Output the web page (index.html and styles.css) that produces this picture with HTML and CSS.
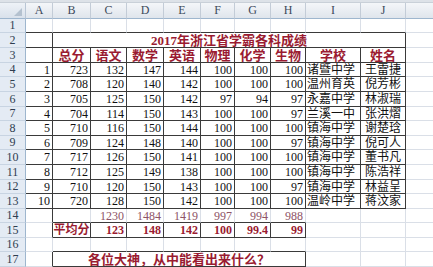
FILE: index.html
```html
<!DOCTYPE html>
<html lang="zh">
<head>
<meta charset="utf-8">
<title>2017年浙江省学霸各科成绩</title>
<link rel="stylesheet" href="styles.css">
</head>
<body>
<div class="window">
  <div class="topbar"></div>
  <div class="sheet">
    <!-- column headers -->
    <div class="corner"></div>
    <div class="ch">A</div><div class="ch">B</div><div class="ch">C</div><div class="ch">D</div><div class="ch">E</div><div class="ch">F</div><div class="ch">G</div><div class="ch">H</div><div class="ch">I</div><div class="ch">J</div><div class="ch"></div>

    <!-- row 1 -->
    <div class="rh">1</div>
    <div class="c db"></div><div class="c db"></div><div class="c db"></div><div class="c db"></div><div class="c db"></div><div class="c db"></div><div class="c db"></div><div class="c db"></div><div class="c db"></div><div class="c db"></div><div class="c"></div>

    <!-- row 2 -->
    <div class="rh">2</div>
    <div class="c dr db"></div>
    <div class="c dr db hd title span9">2017年浙江省学霸各科成绩</div>
    <div class="c"></div>

    <!-- row 3 -->
    <div class="rh">3</div>
    <div class="c dr db"></div>
    <div class="c dr db hd">总分</div><div class="c dr db hd">语文</div><div class="c dr db hd">数学</div><div class="c dr db hd">英语</div><div class="c dr db hd">物理</div><div class="c dr db hd">化学</div><div class="c dr db hd">生物</div><div class="c dr db hd">学校</div><div class="c dr db hd">姓名</div>
    <div class="c"></div>

    <!-- row 4 -->
    <div class="rh">4</div>
    <div class="c dr db n">1</div><div class="c dr db n">723</div><div class="c dr db n">132</div><div class="c dr db n">147</div><div class="c dr db n">144</div><div class="c dr db n">100</div><div class="c dr db n">100</div><div class="c dr db n">100</div><div class="c dr db s">诸暨中学</div><div class="c dr db m">王雷捷</div>
    <div class="c"></div>

    <!-- row 5 -->
    <div class="rh">5</div>
    <div class="c dr db n">2</div><div class="c dr db n">708</div><div class="c dr db n">120</div><div class="c dr db n">140</div><div class="c dr db n">142</div><div class="c dr db n">100</div><div class="c dr db n">100</div><div class="c dr db n">100</div><div class="c dr db s">温州育英</div><div class="c dr db m">倪芳彬</div>
    <div class="c"></div>

    <!-- row 6 -->
    <div class="rh">6</div>
    <div class="c dr db n">3</div><div class="c dr db n">705</div><div class="c dr db n">125</div><div class="c dr db n">150</div><div class="c dr db n">142</div><div class="c dr db n">97</div><div class="c dr db n">94</div><div class="c dr db n">97</div><div class="c dr db s">永嘉中学</div><div class="c dr db m">林淑瑞</div>
    <div class="c"></div>

    <!-- row 7 -->
    <div class="rh">7</div>
    <div class="c dr db n">4</div><div class="c dr db n">704</div><div class="c dr db n">114</div><div class="c dr db n">150</div><div class="c dr db n">143</div><div class="c dr db n">100</div><div class="c dr db n">100</div><div class="c dr db n">97</div><div class="c dr db s">兰溪一中</div><div class="c dr db m">张洪熠</div>
    <div class="c"></div>

    <!-- row 8 -->
    <div class="rh">8</div>
    <div class="c dr db n">5</div><div class="c dr db n">710</div><div class="c dr db n">116</div><div class="c dr db n">150</div><div class="c dr db n">144</div><div class="c dr db n">100</div><div class="c dr db n">100</div><div class="c dr db n">100</div><div class="c dr db s">镇海中学</div><div class="c dr db m">谢楚琀</div>
    <div class="c"></div>

    <!-- row 9 -->
    <div class="rh">9</div>
    <div class="c dr db n">6</div><div class="c dr db n">709</div><div class="c dr db n">124</div><div class="c dr db n">148</div><div class="c dr db n">140</div><div class="c dr db n">100</div><div class="c dr db n">100</div><div class="c dr db n">97</div><div class="c dr db s">镇海中学</div><div class="c dr db m">倪可人</div>
    <div class="c"></div>

    <!-- row 10 -->
    <div class="rh">10</div>
    <div class="c dr db n">7</div><div class="c dr db n">717</div><div class="c dr db n">126</div><div class="c dr db n">150</div><div class="c dr db n">141</div><div class="c dr db n">100</div><div class="c dr db n">100</div><div class="c dr db n">100</div><div class="c dr db s">镇海中学</div><div class="c dr db m">董书凡</div>
    <div class="c"></div>

    <!-- row 11 -->
    <div class="rh">11</div>
    <div class="c dr db n">8</div><div class="c dr db n">712</div><div class="c dr db n">125</div><div class="c dr db n">149</div><div class="c dr db n">138</div><div class="c dr db n">100</div><div class="c dr db n">100</div><div class="c dr db n">100</div><div class="c dr db s">镇海中学</div><div class="c dr db m">陈浩祥</div>
    <div class="c"></div>

    <!-- row 12 -->
    <div class="rh">12</div>
    <div class="c dr db n">9</div><div class="c dr db n">710</div><div class="c dr db n">120</div><div class="c dr db n">150</div><div class="c dr db n">143</div><div class="c dr db n">100</div><div class="c dr db n">100</div><div class="c dr db n">97</div><div class="c dr db s">镇海中学</div><div class="c dr db m">林益呈</div>
    <div class="c"></div>

    <!-- row 13 -->
    <div class="rh">13</div>
    <div class="c dr db n">10</div><div class="c dr db n">720</div><div class="c dr db n">128</div><div class="c dr db n">150</div><div class="c dr db n">142</div><div class="c dr db n">100</div><div class="c dr db n">100</div><div class="c dr db n">100</div><div class="c dr db s">温岭中学</div><div class="c dr db m">蒋汶家</div>
    <div class="c"></div>

    <!-- row 14 -->
    <div class="rh">14</div>
    <div class="c dr"></div>
    <div class="c db"></div><div class="c db n sum">1230</div><div class="c db n sum">1484</div><div class="c db n sum">1419</div><div class="c db n sum">997</div><div class="c db n sum">994</div><div class="c db n sum">988</div>
    <div class="c"></div><div class="c"></div><div class="c"></div>

    <!-- row 15 -->
    <div class="rh">15</div>
    <div class="c dr"></div>
    <div class="c dr db hd avg-label">平均分</div><div class="c dr db n avg">123</div><div class="c dr db n avg">148</div><div class="c dr db n avg">142</div><div class="c dr db n avg">100</div><div class="c dr db n avg">99.4</div><div class="c dr db n avg">99</div>
    <div class="c"></div><div class="c"></div><div class="c"></div>

    <!-- row 16 -->
    <div class="rh">16</div>
    <div class="c"></div>
    <div class="c db"></div><div class="c db"></div><div class="c db"></div><div class="c db"></div><div class="c db"></div><div class="c db"></div><div class="c db"></div>
    <div class="c"></div><div class="c"></div><div class="c"></div>

    <!-- row 17 -->
    <div class="rh">17</div>
    <div class="c dr"></div>
    <div class="c dr db hd note span7">各位大神，从中能看出来什么？</div>
    <div class="c"></div><div class="c"></div><div class="c"></div>
  </div>
</div>
</body>
</html>
```

FILE: styles.css
```css
* { box-sizing: border-box; }

html, body {
  margin: 0;
  padding: 0;
  background: #ffffff;
  overflow: hidden;
}

.window {
  width: 433px;
  height: 267px;
  overflow: hidden;
}

.topbar {
  height: 3px;
  background: #dde2e8;
  border-bottom: 1px solid #c9d0d8;
}

.sheet {
  display: grid;
  grid-template-columns: 26px 27px 38px 36px 37px 37px 34px 36px 35px 55px 45px 60px;
  grid-template-rows: 16px 14px 15px 15px 14px 15px 15px 14px 15px 14px 15px 15px 14px 15px 14px 15px 14px 15px;
  width: 493px;
  font-family: "Liberation Serif", "Noto Sans CJK SC", serif;
  font-size: 12px;
  color: #111111;
}

.corner {
  position: relative;
  background: linear-gradient(#eef2f7, #d9e1eb);
  border-right: 1px solid #b9c6d5;
  border-bottom: 1px solid #9eb6ce;
}

.corner::after {
  content: "";
  position: absolute;
  right: 3px;
  bottom: 2px;
  width: 0;
  height: 0;
  border-left: 8px solid transparent;
  border-bottom: 8px solid #b4c1cf;
}

.ch {
  display: flex;
  align-items: center;
  justify-content: center;
  background: linear-gradient(#f4f6f9, #dfe5ec);
  border-right: 1px solid #c3ccd7;
  border-bottom: 1px solid #9eb6ce;
  color: #3d4a5b;
  font-size: 12px;
}

.rh {
  display: flex;
  align-items: center;
  justify-content: center;
  background: #e4ebf4;
  border-right: 1px solid #9eb6ce;
  border-bottom: 1px solid #c8d4e2;
  color: #2f3d50;
  font-size: 12px;
}

.c {
  display: flex;
  align-items: center;
  justify-content: flex-start;
  border-right: 1px solid #dadfe7;
  border-bottom: 1px solid #dadfe7;
  padding: 0 2px;
  white-space: nowrap;
  overflow: hidden;
  line-height: 1;
}

.dr { border-right-color: #3a3a3a; }
.db { border-bottom-color: #3a3a3a; }

.n { justify-content: flex-end; padding-right: 2px; }

.s { justify-content: flex-start; padding-left: 1px; }

.m { justify-content: center; }

.hd {
  justify-content: center;
  color: #9a1b31;
  font-weight: bold;
  font-size: 13px;
}

.title { font-size: 13px; }

.span9 { grid-column: span 9; }
.span7 { grid-column: span 7; }

.sum { color: #8e5466; }

.avg {
  color: #9a1b31;
  font-weight: bold;
  font-size: 12px;
}

.avg-label {
  font-size: 12px;
  padding: 0;
}

.note { font-size: 13px; }
```
